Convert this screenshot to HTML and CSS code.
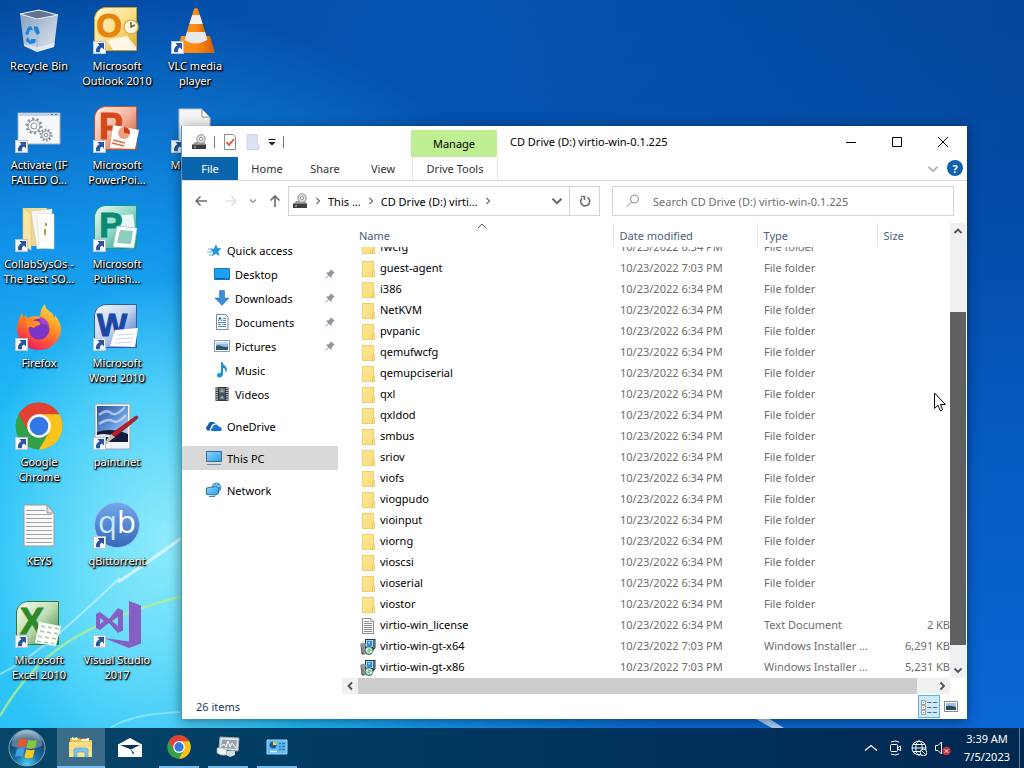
FILE: index.html
```html
<!DOCTYPE html>
<html lang="en">
<head>
  <meta charset="UTF-8">
  <meta name="viewport" content="width=device-width, initial-scale=1.0">
  <title>CD Drive (D:) virtio-win-0.1.225</title>
  <link rel="stylesheet" href="styles.css">
</head>
<body>
  <!-- Shared icons -->
  <svg class="sprite" aria-hidden="true">
    <defs>
      <linearGradient id="g-folder" x1="0" y1="0" x2="1" y2="1"><stop offset="0" stop-color="#ffe795"/><stop offset="1" stop-color="#fddd78"/></linearGradient>
      <linearGradient id="g-bin" x1="0" y1="0" x2="1" y2="1"><stop offset="0" stop-color="#7f9cc0"/><stop offset=".5" stop-color="#b3c3d8"/><stop offset="1" stop-color="#e3e9ef"/></linearGradient>
      <linearGradient id="g-outlook" x1="0" y1="0" x2="1" y2="1"><stop offset="0" stop-color="#fff7d0"/><stop offset=".5" stop-color="#fbe08a"/><stop offset="1" stop-color="#e5a81c"/></linearGradient>
      <linearGradient id="g-ppt" x1="0" y1="0" x2="1" y2="1"><stop offset="0" stop-color="#fdeee6"/><stop offset=".5" stop-color="#f3b49a"/><stop offset="1" stop-color="#c7401c"/></linearGradient>
      <linearGradient id="g-pub" x1="0" y1="0" x2="1" y2="1"><stop offset="0" stop-color="#e8faf5"/><stop offset=".5" stop-color="#93d8c8"/><stop offset="1" stop-color="#0f8a72"/></linearGradient>
      <linearGradient id="g-word" x1="0" y1="0" x2="1" y2="1"><stop offset="0" stop-color="#f4f8fd"/><stop offset=".5" stop-color="#c3d4ef"/><stop offset="1" stop-color="#2b5cb4"/></linearGradient>
      <linearGradient id="g-excel" x1="0" y1="0" x2="1" y2="1"><stop offset="0" stop-color="#f8fcf5"/><stop offset=".5" stop-color="#bfdcb4"/><stop offset="1" stop-color="#2c7a34"/></linearGradient>
      <linearGradient id="g-fox" x1=".8" y1="0" x2=".3" y2="1"><stop offset="0" stop-color="#ffe24a"/><stop offset=".4" stop-color="#ff9a22"/><stop offset=".75" stop-color="#ff4b3a"/><stop offset="1" stop-color="#e31a6a"/></linearGradient>
      <linearGradient id="g-cone" x1="0" y1="0" x2="1" y2="0"><stop offset="0" stop-color="#f7941e"/><stop offset=".5" stop-color="#ff8a12"/><stop offset="1" stop-color="#cf5d00"/></linearGradient>
      <linearGradient id="g-sky" x1="0" y1="0" x2="1" y2="1"><stop offset="0" stop-color="#2b4f9c"/><stop offset=".5" stop-color="#5f94da"/><stop offset="1" stop-color="#e0edf8"/></linearGradient>
      <linearGradient id="g-qb" x1="0" y1="0" x2="0" y2="1"><stop offset="0" stop-color="#72a8ec"/><stop offset="1" stop-color="#3567b8"/></linearGradient>
      <linearGradient id="g-screen" x1="0" y1="0" x2="1" y2="1"><stop offset="0" stop-color="#8fd8fb"/><stop offset="1" stop-color="#2a9be6"/></linearGradient>
      <radialGradient id="g-orb" cx=".5" cy=".95" r=".95"><stop offset="0" stop-color="#4fd2f6"/><stop offset=".35" stop-color="#1b6ea6"/><stop offset=".75" stop-color="#12456e"/><stop offset="1" stop-color="#8fb2c8"/></radialGradient>
    </defs>

    <symbol id="i-shortcut" viewBox="0 0 13 13">
      <rect x="0.5" y="0.5" width="12" height="12" fill="#f5f8fc" stroke="#b9c6d6"/>
      <path d="M4.500 2h6.500V8.500L9 6.600C7 7.600 6.600 9.200 7 11.200H3.200C2.300 8.200 3.800 5.800 6.400 4.200z" fill="#2b549c"/>
    </symbol>
    <symbol id="i-folder" viewBox="0 0 16 16">
      <path d="M2 0h12v16H2z" fill="url(#g-folder)"/>
      <path d="M13.500 9V.5h-11v15H14" fill="none" stroke="#efce6c"/>
      <path d="M12.500 16v-5l2-2v7z" fill="#fbe08c" stroke="#dcb94f" stroke-width=".6"/>
    </symbol>
    <symbol id="i-text" viewBox="0 0 16 16">
      <path d="M2.500 .5h8.500L13.500 3v12.500h-11z" fill="#fff" stroke="#8a8a8a"/>
      <path d="M10.500 .5v3h3" fill="#ddd" stroke="#8a8a8a" stroke-width=".7"/>
      <path d="M4 3.500h5M4 5.500h8M4 7.500h8M4 9.500h8M4 11.500h8M4 13.500h8" stroke="#8c8c8c"/>
    </symbol>
    <symbol id="i-msi" viewBox="0 0 16 16">
      <path d="M5 0h10.500v9l-3 3H5z" fill="#22384e"/>
      <path d="M6 1h7v7H6z" fill="#c0d0e0"/>
      <path d="M7 2h5v5H7z" fill="#2e8fe0"/>
      <path d="M8 3h2v1.500H8z" fill="#a6dcff"/>
      <path d="M1 6h4v9H2z" fill="#e8ecef" stroke="#303030" stroke-width=".8"/>
      <path d="M0 5l3-1.500L6 5v2H1z" fill="#8a98a4"/>
      <path d="M3 7v8" stroke="#303030"/>
      <circle cx="9" cy="11.500" r="4" fill="#a8e2bc" stroke="#1d5a44" stroke-width=".9"/>
      <path d="M6 10l3 1.500 3.500 2" stroke="#f2fff6" stroke-width="1.400"/>
      <circle cx="9" cy="11.500" r="1" fill="#fff" stroke="#333" stroke-width=".5"/>
      <path d="M14 1v8" stroke="#8ea2b4"/>
    </symbol>
    <symbol id="i-drive" viewBox="0 0 16 16">
      <path d="M2 10.500l2-2.500h9l2 2.500z" fill="#9a9a9a"/>
      <path d="M1 10.500h14V15H1z" fill="#3e3e3e"/>
      <circle cx="10" cy="5" r="4.300" fill="#dedede" stroke="#9a9a9a"/>
      <circle cx="10" cy="5" r="1.600" fill="#fff" stroke="#9a9a9a"/>
      <path d="M3 13h2" stroke="#b8dcb8"/>
    </symbol>
    <symbol id="i-pin" viewBox="0 0 10 10">
      <path d="M6 .3l3.700 3.700-1.200.6-1.700 1.700c.3 1.200 0 2-.6 2.600L4 6.700.6 9.800.2 9.400 3.300 6 1.100 3.800c.7-.6 1.600-.8 2.600-.6L5.400 1.500z" fill="#8d969e"/>
    </symbol>
    <symbol id="i-chrome" viewBox="0 0 48 48">
      <circle cx="24" cy="24" r="23.500" fill="#34a047"/>
      <path d="M24 .5A23.500 23.500 0 0 1 44.400 12.300L24 14 13.800 29.900 3.600 12.300A23.500 23.500 0 0 1 24 .5z" fill="#e24134"/>
      <path d="M44.400 12.300A23.500 23.500 0 0 1 24 47.500l10.200-17.600L24 12.300z" fill="#fbc41c"/>
      <circle cx="24" cy="24" r="11.800" fill="#fff"/>
      <circle cx="24" cy="24" r="9.300" fill="#3279e6"/>
    </symbol>
    <symbol id="i-photo" viewBox="0 0 16 16">
      <path d="M.5 2.500h15v11H.5z" fill="#fff" stroke="#8b98a6"/>
      <path d="M2 4h12v8H2z" fill="#8ec1ea"/>
      <path d="M2 4h12v2H2z" fill="#c8dcf2"/>
      <path d="M2 8c3-2 5 0 7 .5s3 .5 5 0V12H2z" fill="#34556b"/>
    </symbol>
    <symbol id="i-down" viewBox="0 0 8 8">
      <path d="M1 2.500l3 3 3-3" fill="none" stroke="currentColor" stroke-width="1.200"/>
    </symbol>
  </svg>

  <main class="desktop">
    <!-- Wallpaper light streaks -->
    <svg class="streaks" viewBox="0 0 1024 728" preserveAspectRatio="none" aria-hidden="true">
      <path d="M0 716C35 655 80 622 190 594" fill="none" stroke="#b5f08a" stroke-width="2.500" opacity=".75"/>
      <path d="M0 674C40 655 85 610 120 578" fill="none" stroke="#fff" stroke-width="2" opacity=".45"/>
      <path d="M118 582C140 568 165 550 190 532" fill="none" stroke="#fff" stroke-width="3" opacity=".6"/>
      <path d="M110 728C130 715 160 712 190 712" fill="none" stroke="#d8ffff" stroke-width="2" opacity=".4"/>
      <path d="M754 718l18 10h12l-16-10z" fill="#d8ecff" opacity=".8"/>
    </svg>

    <nav class="shortcuts" aria-label="Desktop">
      <a href="#" class="shortcut">
        <svg viewBox="0 0 48 48">
          <path d="M5 8L24 4l19 5-4 32-17 5-13-6z" fill="url(#g-bin)"/>
          <path d="M5 8l17 5 21-4L24 4z" fill="#5f7390" stroke="#e8eef5" stroke-width="1.200"/>
          <path d="M22 13v33" stroke="#a2b4ca"/>
          <path d="M10 28l3-7 3-1 2 4-3 0-2 5zM19 20l4 1 2 6-3 2-3-5zM12 31l4 4v-2h5l-1 4-5 1-4-3z" fill="#1c84dc"/>
          <path d="M9 38l13 3 18-4-1 4-17 5-13-6z" fill="#fff" opacity=".45"/>
        </svg>
        <span>Recycle Bin</span>
      </a>
      <a href="#" class="shortcut">
        <svg viewBox="0 0 48 48">
          <path d="M13 1.500h30.500v43H1.500V12C3 5 7 2 13 1.500z" fill="url(#g-outlook)" stroke="#d79c1e"/>
          <path d="M14 34l20-4 9 11v3H20z" fill="#fff" opacity=".85"/>
          <text x="16" y="31" class="mark" font-size="33" fill="#e8830c" stroke="#e8830c">O</text>
          <circle cx="38" cy="21" r="7" fill="#fdf9e8" stroke="#e0b24a" stroke-width="1.500"/>
          <path d="M38 16v5l4-2" fill="none" stroke="#7a5a18" stroke-width="1.500"/>
          <use href="#i-shortcut" x="0" y="35" width="13" height="13"/>
        </svg>
        <span>Microsoft<br>Outlook 2010</span>
      </a>
      <a href="#" class="shortcut">
        <svg viewBox="0 0 48 48">
          <path d="M10 30h29l5 17H6z" fill="url(#g-cone)"/>
          <path d="M23 3q2-2 4 0l10 32q-12 7-24 0z" fill="url(#g-cone)"/>
          <path d="M21.200 9h7.600l2.800 9H18.400z" fill="#f0f0f0"/>
          <path d="M16 26h18l2.500 8q-12 7-23 0z" fill="#e8e8e8"/>
          <use href="#i-shortcut" x="0" y="35" width="13" height="13"/>
        </svg>
        <span>VLC media<br>player</span>
      </a>

      <a href="#" class="shortcut">
        <svg viewBox="0 0 48 48">
          <path d="M3 8h42v31H3z" fill="#f6f8fa" stroke="#9fb0c4"/>
          <path d="M3 8h42v3H3z" fill="#c3d3e6"/>
          <path d="M36 9.500h2m2 0h2" stroke="#4c6784"/>
          <circle cx="19" cy="21" r="7" fill="none" stroke="#8f979d" stroke-width="3" stroke-dasharray="2.200 2.200"/>
          <circle cx="19" cy="21" r="6" fill="#f2f4f5" stroke="#8f979d"/><circle cx="19" cy="21" r="3" fill="#fff" stroke="#8f979d"/>
          <circle cx="31" cy="30" r="5" fill="none" stroke="#8f979d" stroke-width="3" stroke-dasharray="1.600 1.500"/>
          <circle cx="31" cy="30" r="4.300" fill="#e6eaec" stroke="#8f979d"/><circle cx="31" cy="30" r="1.800" fill="#fff" stroke="#8f979d"/>
          <use href="#i-shortcut" x="0" y="35" width="13" height="13"/>
        </svg>
        <span>Activate (IF<br>FAILED O...</span>
      </a>
      <a href="#" class="shortcut">
        <svg viewBox="0 0 48 48">
          <path d="M13 1.500h30.500v43H1.500V12C3 5 7 2 13 1.500z" fill="url(#g-ppt)" stroke="#c4512e"/>
          <text x="18" y="34" class="mark" font-size="36" fill="#d6481a" stroke="#d6481a">P</text>
          <path d="M20 20l26 5-4 19-25-1z" fill="#fff"/>
          <circle cx="31" cy="28" r="6" fill="#f0a080"/><path d="M31 28v-6a6 6 0 0 1 6 7z" fill="#cc3d16"/>
          <path d="M20 35l12 3M19 38l12 3" stroke="#e06a46" stroke-width="1.500"/>
          <use href="#i-shortcut" x="0" y="35" width="13" height="13"/>
        </svg>
        <span>Microsoft<br>PowerPoi...</span>
      </a>
      <a href="#" class="shortcut">
        <svg viewBox="0 0 48 48">
          <path d="M8 4h23l8 8v34H8z" fill="#f4f4f4" stroke="#c2c2c2"/>
          <path d="M31 4v8h8z" fill="#fff" stroke="#8c8c8c"/>
          <use href="#i-shortcut" x="0" y="35" width="13" height="13"/>
        </svg>
        <span>Microsoft</span>
      </a>

      <a href="#" class="shortcut">
        <svg viewBox="0 0 48 48">
          <path d="M8 4h24v38H8z" fill="#f0d98c"/>
          <path d="M16 7l21-2v38l-15 2z" fill="#f7f7f4" stroke="#d0cfc6" stroke-width=".6"/>
          <path d="M22 9l17 1v35l-15-1z" fill="#fffefa" stroke="#d8d6ca" stroke-width=".6"/>
          <path d="M31 19v3m-1 3v6" stroke="#b99a50" stroke-width="2"/>
          <path d="M8 4l8 6v36l-8-4z" fill="#fae5a4" stroke="#dfc26e" stroke-width=".6"/>
          <use href="#i-shortcut" x="0" y="35" width="13" height="13"/>
        </svg>
        <span>CollabSysOs -<br>The Best SO...</span>
      </a>
      <a href="#" class="shortcut">
        <svg viewBox="0 0 48 48">
          <path d="M13 1.500h30.500v43H1.500V12C3 5 7 2 13 1.500z" fill="url(#g-pub)" stroke="#179a82"/>
          <path d="M24 12l16-2 2 14-16 3z" fill="#e8f7f3"/>
          <text x="18" y="33" class="mark" font-size="35" fill="#0a8a72" stroke="#0a8a72">P</text>
          <path d="M24 22l20 2-3 20-21-1z" fill="#fff" stroke="#8fcabd" stroke-width=".7"/>
          <path d="M27 26l13 1-2 13-14-1z" fill="#8ccfbe"/>
          <use href="#i-shortcut" x="0" y="35" width="13" height="13"/>
        </svg>
        <span>Microsoft<br>Publish...</span>
      </a>

      <a href="#" class="shortcut first">
        <svg viewBox="0 0 48 48">
          <path d="M30 1c0 5 4 7 7 9 1 2 2 3 2 5 1-1 1-2 1-3 4 5 6 10 6 14a22 21 0 0 1-44 0C2 20 4 14 7 10l1 5 3-3c0 2 1 3 2 3 3-2 8-3 12-1 0-5 2-10 5-13z" fill="url(#g-fox)"/>
          <circle cx="24" cy="26" r="10.500" fill="#7a35c8"/>
          <path d="M12 17c5 0 7 1 10 1 3 1 4 2 3 4-3 1-5 1-6 3-2-1-6-2-7 1-1-3-1-6 0-9z" fill="#ff8a24"/>
          <path d="M25 14c6 1 10 6 9 12-1-4-4-5-6-5s-3-3-3-7z" fill="#a846c8"/>
          <use href="#i-shortcut" x="0" y="35" width="13" height="13"/>
        </svg>
        <span>Firefox</span>
      </a>
      <a href="#" class="shortcut">
        <svg viewBox="0 0 48 48">
          <path d="M13 1.500h30.500v43H1.500V12C3 5 7 2 13 1.500z" fill="url(#g-word)" stroke="#2b5cb4"/>
          <text x="19" y="33" class="mark" font-size="32" fill="#1a46a8" stroke="#1a46a8">W</text>
          <path d="M22 27l23-2-3 19-25-1z" fill="#fff"/>
          <path d="M24 32l17-1M23 36l17-1M22 40l17-1" stroke="#c6d6ec"/>
          <use href="#i-shortcut" x="0" y="35" width="13" height="13"/>
        </svg>
        <span>Microsoft<br>Word 2010</span>
      </a>

      <a href="#" class="shortcut first">
        <svg viewBox="0 0 48 48">
          <use href="#i-chrome" width="48" height="48"/>
          <use href="#i-shortcut" x="0" y="35" width="13" height="13"/>
        </svg>
        <span>Google<br>Chrome</span>
      </a>
      <a href="#" class="shortcut">
        <svg viewBox="0 0 48 48">
          <path d="M2 2h35v45H2z" fill="#f2f5f8" stroke="#9aa7b5"/>
          <path d="M4 4h31v35H4z" fill="url(#g-sky)"/>
          <path d="M6 13q7-6 12-2t14-6M6 22q9-6 14-3t13-6" fill="none" stroke="#e8f1fb" stroke-width="2.500" opacity=".6"/>
          <path d="M4 30q14-5 31 2v8H4z" fill="#131a3c"/>
          <path d="M4 33q9-3 18 2l-3 1q-8-2-15 0z" fill="#dfe7ef"/>
          <path d="M43 14q3 0 1 3L22 35l-4-3z" fill="#b3202c" stroke="#7c101a" stroke-width=".6"/>
          <path d="M18 32l4 3-4 3-7 6 3-7z" fill="#c9c2b4"/>
          <use href="#i-shortcut" x="0" y="35" width="13" height="13"/>
        </svg>
        <span>paint.net</span>
      </a>

      <a href="#" class="shortcut first">
        <svg viewBox="0 0 48 48">
          <path d="M9 4h23l7 8v33H9z" fill="#fafafa" stroke="#9a9a9a"/>
          <path d="M32 4v8h7z" fill="#e2e2e2" stroke="#9a9a9a"/>
          <path d="M11 9.500h19M11 13.500h26M11 17.500h26M11 21.500h26M11 25.500h26M11 29.500h26M11 33.500h26M11 37.500h26M11 41.500h26" stroke="#a2a2a2"/>
        </svg>
        <span>KEYS</span>
      </a>
      <a href="#" class="shortcut">
        <svg viewBox="0 0 48 48">
          <circle cx="24" cy="24" r="22.500" fill="url(#g-qb)" stroke="#8fc4f4"/>
          <text x="24" y="32" class="qb" font-size="31" fill="#c8e8ff">q<tspan fill="#fff">b</tspan></text>
          <use href="#i-shortcut" x="0" y="35" width="13" height="13"/>
        </svg>
        <span>qBittorrent</span>
      </a>

      <a href="#" class="shortcut first">
        <svg viewBox="0 0 48 48">
          <path d="M13 1.500h30.500v43H1.500V12C3 5 7 2 13 1.500z" fill="url(#g-excel)" stroke="#2c7a34"/>
          <text x="17" y="34" class="mark" font-size="36" fill="#2f8a2c" stroke="#2f8a2c">X</text>
          <path d="M24 22l22 4-5 20-21-3z" fill="#fff"/>
          <path d="M26 26l4 1m3 0l4 1m3 0l4 1M25 31l4 1m3 0l4 1m3 0l4 1M23 36l4 1m3 0l4 1m3 0l4 1M22 41l4 1m3 0l4 1m3 0l3 1" stroke="#a5cd98" stroke-width="1.500"/>
          <use href="#i-shortcut" x="0" y="35" width="13" height="13"/>
        </svg>
        <span>Microsoft<br>Excel 2010</span>
      </a>
      <a href="#" class="shortcut">
        <svg viewBox="0 0 48 48">
          <path d="M36 1l12 4.500v38L36 48 11 38l25 3.500z" fill="#865fc5"/>
          <path d="M3 14l4-2 9 7L25 8l5 2.500v20L25 33l-9-10-9 7-4-2zm4 4v6l4-3zm18-1l-6 4 6 5z" fill="#865fc5" fill-rule="evenodd"/>
          <use href="#i-shortcut" x="0" y="35" width="13" height="13"/>
        </svg>
        <span>Visual Studio<br>2017</span>
      </a>
    </nav>

    <!-- Explorer window -->
    <section class="window" aria-label="CD Drive (D:) virtio-win-0.1.225">
      <header class="titlebar">
        <div class="quick-tools">
          <svg class="icon16" viewBox="0 0 16 16"><use href="#i-drive"/></svg>
          <i class="bar"></i>
          <button aria-label="Properties">
            <svg class="icon16" viewBox="0 0 16 16"><path d="M2.500 .5h8.500l2.500 2.500v12.500h-11z" fill="#fff" stroke="#848a90"/><path d="M4.500 8l2.500 3 5-6" fill="none" stroke="#e2502e" stroke-width="1.800"/></svg>
          </button>
          <button aria-label="New folder">
            <svg class="icon16" viewBox="0 0 16 16"><path d="M2 .5h10.500v9l1.500 1v5H2z" fill="#dce2f3" stroke="#cdd5ea"/></svg>
          </button>
          <button aria-label="Customize Quick Access Toolbar">
            <svg class="icon8" viewBox="0 0 8 8"><path d="M.5 1.500h7" stroke="#111"/><path d="M.5 4h7L4 7.500z" fill="#111"/></svg>
          </button>
          <i class="bar"></i>
        </div>
        <div class="context-group">Manage</div>
        <h1>CD Drive (D:) virtio-win-0.1.225</h1>
        <div class="window-buttons">
          <button aria-label="Minimize"><svg viewBox="0 0 12 12"><path d="M1 6.500h10" stroke="#000"/></svg></button>
          <button aria-label="Maximize"><svg viewBox="0 0 12 12"><path d="M1.500 1.500h9v9h-9z" fill="none" stroke="#000"/></svg></button>
          <button aria-label="Close"><svg viewBox="0 0 12 12"><path d="M1 1l10 10M11 1L1 11" stroke="#000"/></svg></button>
        </div>
      </header>

      <div class="ribbon">
        <button class="file-tab">File</button>
        <button>Home</button>
        <button>Share</button>
        <button>View</button>
        <button class="context-tab">Drive Tools</button>
        <button class="expand" aria-label="Expand the ribbon"><svg viewBox="0 0 8 8"><use href="#i-down"/></svg></button>
        <button class="help" aria-label="Help">?</button>
      </div>

      <div class="toolbar">
        <div class="history">
          <button aria-label="Back"><svg class="icon12" viewBox="0 0 12 12"><path d="M12 6H1M5.500 1.500L1 6l4.500 4.500" fill="none" stroke="#6a6a6a" stroke-width="1.500"/></svg></button>
          <button aria-label="Forward"><svg class="icon12" viewBox="0 0 12 12"><path d="M0 6h11M6.500 1.500L11 6l-4.500 4.500" fill="none" stroke="#d2d2d2" stroke-width="1.200"/></svg></button>
          <button class="recent" aria-label="Recent locations"><svg class="icon8" viewBox="0 0 8 8"><use href="#i-down"/></svg></button>
          <button aria-label="Up"><svg class="icon12" viewBox="0 0 12 12"><path d="M6 12V1M1.500 5.500L6 1l4.500 4.500" fill="none" stroke="#6a6a6a" stroke-width="1.600"/></svg></button>
        </div>
        <div class="address">
          <svg class="icon16" viewBox="0 0 16 16"><use href="#i-drive"/></svg>
          <svg class="icon8 sep" viewBox="0 0 8 8"><path d="M2.500 1l3 3-3 3"/></svg>
          <button>This ...</button>
          <svg class="icon8 sep" viewBox="0 0 8 8"><path d="M2.500 1l3 3-3 3"/></svg>
          <button>CD Drive (D:) virti...</button>
          <svg class="icon8 sep" viewBox="0 0 8 8"><path d="M2.500 1l3 3-3 3"/></svg>
          <button class="previous" aria-label="Previous locations"><svg class="icon12" viewBox="0 0 8 8"><use href="#i-down"/></svg></button>
          <button class="refresh" aria-label="Refresh"><svg class="icon12" viewBox="0 0 12 12"><path d="M8.500 2.500A4.500 4.500 0 1 1 3 3.200M2 1.500h3.500V5" fill="none" stroke="#6d6d6d" stroke-width="1.600"/></svg></button>
        </div>
        <label class="search">
          <svg class="icon16" viewBox="0 0 16 16"><circle cx="9.500" cy="6" r="4" fill="none" stroke="#8a8a8a"/><path d="M6.500 9L2 13.500" stroke="#8a8a8a"/></svg>
          <input type="text" placeholder="Search CD Drive (D:) virtio-win-0.1.225" aria-label="Search CD Drive (D:) virtio-win-0.1.225">
        </label>
      </div>

      <div class="content">
        <nav class="tree" aria-label="Navigation pane">
          <a href="#"><svg class="icon16" viewBox="0 0 16 16"><path d="M10 2l1.500 4 4 .5-3.200 3 1.200 4.500-3.800-2.200L6 14.500 7 10 4.200 7.200l4-.7z" fill="#2294dc"/><path d="M2 7h4M1 10h5M3 13h3" stroke="#5ab0e6"/></svg>Quick access</a>
          <a href="#" class="child"><svg class="icon16" viewBox="0 0 16 16"><path d="M.5 2.500h15v11H.5z" fill="#1ea0f0" stroke="#1678be"/><path d="M1 12.500h14" stroke="#0a5c9c" stroke-dasharray="10 1 1 1"/></svg>Desktop<svg class="pin" viewBox="0 0 10 10"><use href="#i-pin"/></svg></a>
          <a href="#" class="child"><svg class="icon16" viewBox="0 0 16 16"><path d="M5.500 .5h5V8H15l-7 7.500L1 8h4.500z" fill="#3b8fd8" stroke="#2a72b4" stroke-width=".6"/></svg>Downloads<svg class="pin" viewBox="0 0 10 10"><use href="#i-pin"/></svg></a>
          <a href="#" class="child"><svg class="icon16" viewBox="0 0 16 16"><path d="M2.500 .5h9L14 3v12.500H2.500z" fill="#fff" stroke="#7c8a96"/><path d="M4 8.500h8M4 10.500h3M8.500 10.500h4M4 12.500h8M9 4.500h3M9 6.500h3" stroke="#3c8fc8"/><path d="M4.500 7L6 3l1.500 4" fill="none" stroke="#1c6fae"/></svg>Documents<svg class="pin" viewBox="0 0 10 10"><use href="#i-pin"/></svg></a>
          <a href="#" class="child"><svg class="icon16" viewBox="0 0 16 16"><use href="#i-photo"/></svg>Pictures<svg class="pin" viewBox="0 0 10 10"><use href="#i-pin"/></svg></a>
          <a href="#" class="child"><svg class="icon16" viewBox="0 0 16 16"><path d="M7 0h1.500c.5 3.500 5 4 4.500 8.500-.5 1-1 1.500-1.500 2 .5-2.500-.5-4-2.500-4.500V12c0 2-1.500 3.500-3.500 3.500S2.500 14.500 3 13s2-2.500 4-2.200z" fill="#1c92dc"/></svg>Music</a>
          <a href="#" class="child"><svg class="icon16" viewBox="0 0 16 16"><path d="M1.500 1h13v14h-13z" fill="#33363c"/><path d="M3 1.500v14M13 1.500v14" stroke="#f2f2f2" stroke-width="1.400" stroke-dasharray="1.200 1"/><path d="M5 2h6v5.500H5z" fill="#5c7a8c"/><path d="M5 8.500h6V14H5z" fill="#40588c"/><path d="M6 6l2-3 2 3zM6 12.500l2-3 2 3z" fill="#c2b44c"/></svg>Videos</a>
          <a href="#" class="apart"><svg class="icon16" viewBox="0 0 16 16"><path d="M1.500 12.500C-.5 11-.3 8 2 7.500 2 4.500 5.500 2.500 8.500 4.500L10 5.500C7 5 5 7 5 9.500c-1.500.5-1.500 2-.8 3z" fill="#0a5cb4"/><path d="M6 13c-1.800-.5-1.500-3 .5-3C6.500 6.500 11 5 12.500 8.500c3 0 4.500 3.500 2 4.500z" fill="#1474d0"/></svg>OneDrive</a>
          <a href="#" class="apart current"><svg class="icon16" viewBox="0 0 16 16"><path d="M.5 1.500h15v10H.5z" fill="url(#g-screen)" stroke="#356b96"/><path d="M1 14.500h14" stroke="#6b8ea8"/></svg>This PC</a>
          <a href="#" class="apart"><svg class="icon16" viewBox="0 0 16 16"><circle cx="10.500" cy="5.500" r="5" fill="#4a9ccc"/><path d="M7 3q4 2 8 1M10 1q4 5 1 10" fill="none" stroke="#b8e0f4" stroke-width=".8"/><path d="M.5 6l9-1.500 3 1v6l-3 1.500-9-.5z" fill="url(#g-screen)" stroke="#2a76a8"/><path d="M3 14.500h6" stroke="#4a84a8"/></svg>Network</a>
        </nav>

        <div class="listing">
          <div class="rows">
            <table>
              <thead>
                <tr>
                  <th class="name" scope="col">Name<svg class="sorted" viewBox="0 0 10 6"><path d="M1 5l4-4 4 4" fill="none" stroke="#555"/></svg></th>
                  <th class="date" scope="col">Date modified</th>
                  <th class="type" scope="col">Type</th>
                  <th class="size" scope="col">Size</th>
                </tr>
              </thead>
              <tbody>
                <tr class="cut"><td><div><svg class="icon16" viewBox="0 0 16 16"><use href="#i-folder"/></svg>fwcfg</div></td><td><div>10/23/2022 6:34 PM</div></td><td><div>File folder</div></td><td></td></tr>
                <tr><td><svg class="icon16" viewBox="0 0 16 16"><use href="#i-folder"/></svg>guest-agent</td><td>10/23/2022 7:03 PM</td><td>File folder</td><td></td></tr>
                <tr><td><svg class="icon16" viewBox="0 0 16 16"><use href="#i-folder"/></svg>i386</td><td>10/23/2022 6:34 PM</td><td>File folder</td><td></td></tr>
                <tr><td><svg class="icon16" viewBox="0 0 16 16"><use href="#i-folder"/></svg>NetKVM</td><td>10/23/2022 6:34 PM</td><td>File folder</td><td></td></tr>
                <tr><td><svg class="icon16" viewBox="0 0 16 16"><use href="#i-folder"/></svg>pvpanic</td><td>10/23/2022 6:34 PM</td><td>File folder</td><td></td></tr>
                <tr><td><svg class="icon16" viewBox="0 0 16 16"><use href="#i-folder"/></svg>qemufwcfg</td><td>10/23/2022 6:34 PM</td><td>File folder</td><td></td></tr>
                <tr><td><svg class="icon16" viewBox="0 0 16 16"><use href="#i-folder"/></svg>qemupciserial</td><td>10/23/2022 6:34 PM</td><td>File folder</td><td></td></tr>
                <tr><td><svg class="icon16" viewBox="0 0 16 16"><use href="#i-folder"/></svg>qxl</td><td>10/23/2022 6:34 PM</td><td>File folder</td><td></td></tr>
                <tr><td><svg class="icon16" viewBox="0 0 16 16"><use href="#i-folder"/></svg>qxldod</td><td>10/23/2022 6:34 PM</td><td>File folder</td><td></td></tr>
                <tr><td><svg class="icon16" viewBox="0 0 16 16"><use href="#i-folder"/></svg>smbus</td><td>10/23/2022 6:34 PM</td><td>File folder</td><td></td></tr>
                <tr><td><svg class="icon16" viewBox="0 0 16 16"><use href="#i-folder"/></svg>sriov</td><td>10/23/2022 6:34 PM</td><td>File folder</td><td></td></tr>
                <tr><td><svg class="icon16" viewBox="0 0 16 16"><use href="#i-folder"/></svg>viofs</td><td>10/23/2022 6:34 PM</td><td>File folder</td><td></td></tr>
                <tr><td><svg class="icon16" viewBox="0 0 16 16"><use href="#i-folder"/></svg>viogpudo</td><td>10/23/2022 6:34 PM</td><td>File folder</td><td></td></tr>
                <tr><td><svg class="icon16" viewBox="0 0 16 16"><use href="#i-folder"/></svg>vioinput</td><td>10/23/2022 6:34 PM</td><td>File folder</td><td></td></tr>
                <tr><td><svg class="icon16" viewBox="0 0 16 16"><use href="#i-folder"/></svg>viorng</td><td>10/23/2022 6:34 PM</td><td>File folder</td><td></td></tr>
                <tr><td><svg class="icon16" viewBox="0 0 16 16"><use href="#i-folder"/></svg>vioscsi</td><td>10/23/2022 6:34 PM</td><td>File folder</td><td></td></tr>
                <tr><td><svg class="icon16" viewBox="0 0 16 16"><use href="#i-folder"/></svg>vioserial</td><td>10/23/2022 6:34 PM</td><td>File folder</td><td></td></tr>
                <tr><td><svg class="icon16" viewBox="0 0 16 16"><use href="#i-folder"/></svg>viostor</td><td>10/23/2022 6:34 PM</td><td>File folder</td><td></td></tr>
                <tr><td><svg class="icon16" viewBox="0 0 16 16"><use href="#i-text"/></svg>virtio-win_license</td><td>10/23/2022 6:34 PM</td><td>Text Document</td><td>2 KB</td></tr>
                <tr><td><svg class="icon16" viewBox="0 0 16 16"><use href="#i-msi"/></svg>virtio-win-gt-x64</td><td>10/23/2022 7:03 PM</td><td>Windows Installer ...</td><td>6,291 KB</td></tr>
                <tr><td><svg class="icon16" viewBox="0 0 16 16"><use href="#i-msi"/></svg>virtio-win-gt-x86</td><td>10/23/2022 7:03 PM</td><td>Windows Installer ...</td><td>5,231 KB</td></tr>
              </tbody>
            </table>
          </div>
          <div class="scroll-y">
            <button aria-label="Scroll up"><svg class="icon12" viewBox="0 0 12 12"><path d="M2.500 8L6 4.500 9.500 8"/></svg></button>
            <div class="track"><div class="thumb"></div></div>
            <button aria-label="Scroll down"><svg class="icon12" viewBox="0 0 12 12"><path d="M2.500 4.500L6 8l3.500-3.500"/></svg></button>
          </div>
          <div class="scroll-x">
            <button aria-label="Scroll left"><svg class="icon12" viewBox="0 0 12 12"><path d="M8 2.500L4.500 6 8 9.500"/></svg></button>
            <div class="track"><div class="thumb"></div></div>
            <button aria-label="Scroll right"><svg class="icon12" viewBox="0 0 12 12"><path d="M4.500 2.500L8 6 4.500 9.500"/></svg></button>
          </div>
        </div>
      </div>

      <footer class="status">
        <span>26 items</span>
        <button class="view selected" aria-label="Details view"><svg class="icon16" viewBox="0 0 16 16"><path d="M.5 1.500h4v4h-4zM.5 6.500h4v4h-4zM.5 11.500h4v4h-4z" fill="#fff" stroke="#8a8a8a" stroke-width=".8"/><path d="M2 3.500h1M2 8.500h1M2 13.500h1" stroke="#c05a5a"/><path d="M6.500 3.500h4m1.500 0h4M6.500 8.500h4m1.500 0h4M6.500 13.500h4m1.500 0h4" stroke="#5c6a74"/></svg></button>
        <button class="view" aria-label="Large icons view"><svg class="icon16" viewBox="0 0 16 16"><path d="M1.500 2.500h13v10h-13z" fill="#fff" stroke="#7d8c98"/><path d="M3 4h10v7H3z" fill="#9cc0f0"/><path d="M3 7q4-1 10 1v3H3z" fill="#2c4a58"/></svg></button>
      </footer>
    </section>

    <svg class="pointer" viewBox="0 0 12 20" aria-hidden="true"><path d="M.5 1v15.500L4 13.200l2.400 5.600 2.300-1L6.400 12.500h5z" fill="#fff" stroke="#000"/></svg>
  </main>

  <!-- Taskbar -->
  <footer class="taskbar">
    <button class="start" aria-label="Start">
      <svg viewBox="0 0 38 38">
        <circle cx="19" cy="19" r="18" fill="url(#g-orb)" stroke="#7fa8bf"/>
        <path d="M3.500 17A15.500 15.500 0 0 1 34.500 17q-15 5-31 0z" fill="#fff" opacity=".28"/>
        <path d="M11 10.500q4-2 8-.2l-1.800 8q-3.700-1.800-8 .2z" fill="#e8562a"/>
        <path d="M20.300 10.800q3.700 1.800 8.500.2l-1.800 8q-4.600 1.500-8.500-.2z" fill="#8cc63f"/>
        <path d="M8.800 20q4.200-1.800 8-.2l-1.800 8q-3.700-1.700-8 .1z" fill="#3c9fe4"/>
        <path d="M18.200 20.300q3.900 1.800 8.500.2l-1.800 8q-4.500 1.600-8.500-.2z" fill="#fcc81e"/>
      </svg>
    </button>
    <button class="task active" aria-label="File Explorer">
      <svg viewBox="0 0 26 24"><path d="M2 3h9l2 2h11v5H2z" fill="#e8b94c"/><path d="M4 2h5v3H4zM13 3h8v3h-8z" fill="#f8fff0"/><path d="M5 2.500h3" stroke="#4caf50"/><path d="M13 3.500h6" stroke="#e05a4a"/><path d="M1 7h23v15H1z" fill="#fbe08e"/><path d="M1 11h23M1 15h23" stroke="#f2cd6a"/><path d="M6 22v-7q0-2 2-2h10q2 0 2 2v7h-3v-5H9v5z" fill="#7cc4ee" stroke="#4c9ccc" stroke-width=".6"/></svg>
    </button>
    <button class="task" aria-label="Mail">
      <svg viewBox="0 0 26 24"><path d="M1 8.500L13 2l12 6.500V21H1z" fill="#fff"/><path d="M3 9h20l-9 4.500z" fill="#05345c"/><path d="M13.500 13l2.500 5.500 1-1.500z" fill="#05345c"/></svg>
    </button>
    <button class="task running" aria-label="Google Chrome">
      <svg viewBox="0 0 48 48"><use href="#i-chrome"/></svg>
    </button>
    <button class="task running" aria-label="Task Manager">
      <svg viewBox="0 0 26 24"><path d="M5 2l19 1-1 13-19-2z" fill="#e4e9eb" stroke="#9ca8ae"/><path d="M7 4.500l15 .8-.8 8.700L6.200 13z" fill="#95a3aa"/><path d="M7 11l2-2 2 3 2-6 2 6 2-4 4 5" fill="none" stroke="#fff"/><path d="M2 13q6-1 10 2l-1 5q-5 1-9-2z" fill="#eef1f2" stroke="#9aa4a8" stroke-width=".6"/><path d="M12 16h8v4l-5 2-4-2z" fill="#d6dddf"/></svg>
    </button>
    <button class="task running" aria-label="Control Panel">
      <svg viewBox="0 0 26 24"><path d="M3 5h20v14H3z" fill="#62bcf0" stroke="#9cd6f6"/><circle cx="9" cy="10" r="3.500" fill="#1c5c98"/><path d="M9 10V6.500A3.500 3.500 0 0 1 12.500 10z" fill="#f4d84c"/><path d="M15 8.500h6M15 11.500h6M15 14.500h6" stroke="#2a74b4" stroke-width="1.500" stroke-dasharray="2 1 3"/><path d="M6 16.500h7" stroke="#e6f5ff" stroke-width="1.500"/></svg>
    </button>

    <div class="tray">
      <button aria-label="Show hidden icons"><svg viewBox="0 0 16 16"><path d="M2 10.500l6-5 6 5" fill="none" stroke="#fff" stroke-width="1.300"/></svg></button>
      <button aria-label="Meet Now"><svg viewBox="0 0 16 16"><rect x="3.500" y="4.500" width="7" height="7" rx="1" fill="none" stroke="#fff"/><path d="M11 7.500l2.500-1.500v4.500L11 9M4 2q4-2 8 0M4 14q4 2 8 0" fill="none" stroke="#fff"/></svg></button>
      <button aria-label="Network"><svg viewBox="0 0 16 16"><circle cx="8" cy="8" r="7" fill="none" stroke="#fff"/><ellipse cx="8" cy="8" rx="3.200" ry="7" fill="none" stroke="#fff"/><path d="M1 8h14M2 4.500h12M2 11.500h7" stroke="#fff"/><circle cx="12.500" cy="12.500" r="3.300" fill="#002b54" stroke="#fff"/><path d="M10.500 10.500l4 4" stroke="#fff"/></svg></button>
      <button aria-label="Volume muted"><svg viewBox="0 0 16 16"><path d="M.5 5.500h2.500L6.500 2v12L3 10.500H.5z" fill="none" stroke="#fff"/><circle cx="11.500" cy="11" r="4.200" fill="#d22f3c"/><path d="M9.800 9.300l3.400 3.400M13.200 9.300l-3.400 3.400" stroke="#fff"/></svg></button>
      <button class="clock">3:39 AM<br>7/5/2023</button>
      <button class="peek" aria-label="Show desktop"></button>
    </div>
  </footer>
</body>
</html>
```
FILE: styles.css
```css
* {
  box-sizing: border-box;
}

body {
  margin: 0;
  height: 100vh;
  display: grid;
  grid-template-rows: 1fr 40px;
  font-family: "Noto Sans", "Open Sans", sans-serif;
  font-size: 11px;
  line-height: 15px;
  color: #000;
  overflow: hidden;
}

button,
input {
  font: inherit;
  color: inherit;
  margin: 0;
  padding: 0;
  border: 0;
  background: none;
}

a {
  color: inherit;
  text-decoration: none;
}

svg {
  display: block;
  flex: none;
}

.sprite {
  position: absolute;
  width: 0;
  height: 0;
}

.icon16 {
  width: 16px;
  height: 16px;
}

.icon12 {
  width: 12px;
  height: 12px;
}

.icon8 {
  width: 8px;
  height: 8px;
}

/* Desktop and wallpaper */
.desktop {
  position: relative;
  overflow: hidden;
  background:
    radial-gradient(ellipse 18% 36% at 16% 74%, rgba(165, 244, 252, 0.8), rgba(110, 225, 250, 0) 100%),
    radial-gradient(ellipse 56% 84% at 10% 84%, #3ccdf8 0%, #22bcf6 36%, #1292ea 62%, rgba(8, 98, 204, 0) 100%),
    radial-gradient(ellipse 60% 60% at 42% 0%, rgba(4, 98, 200, 0.5), rgba(4, 98, 200, 0) 100%),
    linear-gradient(to bottom, #04469a 0%, #044ca8 30%, #055cc4 65%, #0a68d4 100%);
}

.streaks {
  position: absolute;
  inset: 0;
  width: 100%;
  height: 100%;
}

/* Desktop icons */
.shortcuts {
  position: relative;
  display: grid;
  grid-template-columns: repeat(3, 78px);
  grid-auto-rows: 99px;
  padding-top: 6px;
}

.shortcut {
  display: flex;
  flex-direction: column;
  align-items: center;
  gap: 4px;
  color: #fff;
  text-align: center;
  white-space: nowrap;
  text-shadow: 0 1px 2px #000, 1px 1px 2px #000, 1px 1px 1px #000;
}

.first {
  grid-column: 1;
}

.shortcut svg {
  width: 48px;
  height: 48px;
}

.mark {
  font-family: "Liberation Sans", sans-serif;
  font-weight: bold;
  text-anchor: middle;
  text-shadow: none;
}

.qb {
  font-family: "Open Sans", sans-serif;
  text-anchor: middle;
  text-shadow: none;
}

/* Explorer window */
.window {
  position: absolute;
  top: 126px;
  right: 57px;
  bottom: 9px;
  left: 181px;
  display: flex;
  flex-direction: column;
  background: #fff;
  border-left: 1px solid #4a9cc4;
  box-shadow: 0 2px 12px rgba(0, 0, 0, 0.45);
}

.titlebar {
  display: flex;
  height: 31px;
  padding-right: 1px;
}

.quick-tools {
  width: 229px;
  padding-left: 9px;
  display: flex;
  align-items: center;
  gap: 7px;
}

.bar {
  width: 1px;
  height: 12px;
  background: #777;
}

.context-group {
  width: 86px;
  margin-top: 4px;
  line-height: 28px;
  text-align: center;
  background: #c0ee92;
}

.titlebar h1 {
  flex: 1;
  margin: 0;
  padding-left: 13px;
  font-size: inherit;
  font-weight: normal;
  line-height: 31px;
}

.window-buttons {
  display: flex;
}

.window-buttons button {
  width: 46px;
  display: grid;
  place-items: center;
}

.window-buttons svg {
  width: 12px;
  height: 12px;
}

/* Ribbon tabs */
.ribbon {
  display: flex;
  height: 24px;
  padding-right: 4px;
  border-bottom: 1px solid #dadbdc;
}

.ribbon button {
  width: 58px;
  color: #333;
}

.ribbon .file-tab {
  width: 56px;
  color: #fff;
  background: #0a64ad;
}

.ribbon .context-tab {
  width: 86px;
  border-left: 1px solid #e2e2e2;
  border-right: 1px solid #e2e2e2;
}

.ribbon .expand {
  width: 16px;
  margin-left: auto;
  color: #b4b4b4;
  display: grid;
  place-items: center;
}

.expand svg {
  width: 12px;
  height: 12px;
}

.ribbon .help {
  width: 16px;
  height: 16px;
  margin: 3px 0 0 6px;
  border-radius: 50%;
  background: #0f62b0;
  color: #fff;
  font-weight: bold;
}

/* Address and search */
.toolbar {
  display: grid;
  grid-template-columns: 106px 312fr 12px 342fr;
  height: 40px;
  padding: 5px 13px 5px 0;
}

.history {
  display: flex;
  align-items: center;
  gap: 12px;
  padding-left: 13px;
}

.history button + button {
  margin-left: 6px;
}

.recent {
  color: #8c8c8c;
}

.history .recent,
.history .recent + button {
  margin-left: 0;
}

.address,
.search {
  display: flex;
  align-items: center;
  border: 1px solid #d4d4d4;
}

.address {
  padding-left: 3px;
  gap: 6px;
  white-space: nowrap;
}

.sep {
  fill: none;
  stroke: #6d6d6d;
  stroke-width: 1.2;
}

.previous {
  margin-left: auto;
  color: #606060;
}

.refresh {
  align-self: stretch;
  width: 30px;
  display: grid;
  place-items: center;
  border-left: 1px solid #d4d4d4;
}

.search {
  grid-column: 4;
  padding-left: 12px;
  gap: 12px;
}

.search input {
  flex: 1;
  min-width: 0;
  outline: none;
}

.search input::placeholder {
  color: #6d6d6d;
  opacity: 1;
}

/* Navigation pane */
.content {
  flex: 1;
  min-height: 0;
  display: grid;
  grid-template-columns: 156px 1fr;
  column-gap: 4px;
}

.tree {
  padding-top: 17px;
}

.tree a {
  display: flex;
  align-items: center;
  gap: 5px;
  height: 24px;
  padding-left: 24px;
}

.tree .child {
  padding-left: 32px;
}

.tree .apart {
  margin-top: 8px;
}

.tree .current {
  background: #d9d9d9;
}

.pin {
  width: 10px;
  height: 10px;
  margin: 0 3px 0 auto;
}

/* File list */
.listing {
  display: grid;
  grid-template-columns: 1fr 16px;
  grid-template-rows: 1fr 16px;
  padding: 2px 1px 1px 0;
  min-width: 0;
}

.rows {
  overflow: hidden;
}

table {
  width: 100%;
  table-layout: fixed;
  border-collapse: collapse;
}

th {
  position: relative;
  height: 24px;
  padding: 0 0 0 6px;
  border-left: 1px solid #e5e5e5;
  text-align: left;
  font-weight: normal;
  color: #4c607a;
}

.name {
  padding-left: 17px;
  border-left: 0;
}

.sorted {
  position: absolute;
  top: 0;
  left: 50%;
  width: 10px;
  height: 6px;
}

.date {
  width: 144px;
}

.type {
  width: 120px;
}

.size {
  width: 73px;
}

td {
  height: 21px;
  padding: 0 0 0 7px;
  white-space: nowrap;
  color: #6d6d6d;
}

td:first-child {
  padding-left: 18px;
  color: #000;
}

td:last-child {
  padding: 0;
  text-align: right;
}

td .icon16 {
  display: inline-block;
  vertical-align: middle;
  margin: -3px 4px -3px 0;
}

.cut td {
  height: 10px;
}

/* First row is scrolled partly under the header */
.cut div {
  display: flex;
  align-items: flex-end;
  height: 10px;
  line-height: 21px;
  overflow: hidden;
}

.cut .icon16 {
  margin-bottom: 3px;
}

/* Scrollbars */
.scroll-y,
.scroll-x {
  display: flex;
  background: #f0f0f0;
}

.scroll-y {
  flex-direction: column;
}

.scroll-y button,
.scroll-x button {
  width: 16px;
  height: 16px;
  display: grid;
  place-items: center;
}

.scroll-y path,
.scroll-x path {
  fill: none;
  stroke: #505050;
  stroke-width: 1.8;
}

.track {
  flex: 1;
  display: flex;
}

.scroll-y .track {
  flex-direction: column;
  justify-content: flex-end;
  padding-bottom: 17px;
}

.scroll-y .thumb {
  height: 82%;
  background: #606060;
}

.scroll-x .thumb {
  width: 97%;
  background: #cdcdcd;
}

/* Status bar */
.status {
  display: flex;
  align-items: flex-start;
  height: 24px;
  padding: 0 5px 0 14px;
  color: #1e395b;
}

.status span {
  margin-right: auto;
  line-height: 23px;
}

.view {
  width: 22px;
  height: 23px;
  display: grid;
  place-items: center;
}

.selected {
  background: #cce8ff;
  border: 1px solid #5cb4dc;
}

.pointer {
  position: absolute;
  top: 392px;
  left: 934px;
  width: 12px;
  height: 20px;
}

/* Taskbar */
.taskbar {
  display: flex;
  gap: 1px;
  background: linear-gradient(to right, #074668, #003a62 35%, #00305c 70%, #002850);
  color: #fff;
}

.start {
  width: 56px;
  padding-left: 8px;
}

.start svg {
  width: 38px;
  height: 38px;
}

.task {
  position: relative;
  width: 48px;
  display: grid;
  place-items: center;
}

.task svg {
  width: 26px;
  height: 24px;
}

.active {
  background: rgba(255, 255, 255, 0.22);
}

.active,
.running {
  border-bottom: 2px solid #76b9ed;
}

.running {
  width: 40px;
  margin: 0 4px;
}

.tray {
  margin-left: auto;
  display: flex;
  align-items: center;
  gap: 8px;
}

.tray svg {
  width: 16px;
  height: 16px;
}

.clock {
  width: 56px;
  line-height: 18px;
}

.peek {
  align-self: stretch;
  width: 5px;
  margin-left: -4px;
  border-left: 1px solid #5c7a94;
}
```
